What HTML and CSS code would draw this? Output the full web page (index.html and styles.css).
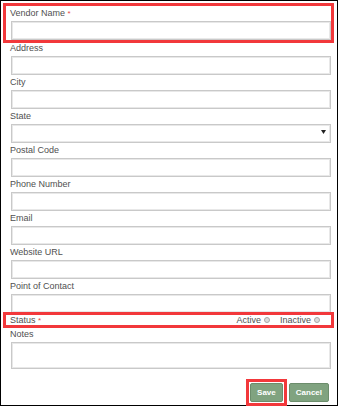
FILE: index.html
```html
<!DOCTYPE html>
<html lang="en">
<head>
    <meta charset="UTF-8">
    <meta name="viewport" content="width=device-width, initial-scale=1.0">
    <title>Vendor</title>
    <link rel="stylesheet" href="styles.css">
</head>
<body>

    <div class="panel">
        <form class="vendor-form">
            <div class="field field-first marked">
                <label class="field-label">Vendor Name <span class="req">*</span></label>
                <input class="text-input" type="text">
            </div>
            <div class="field">
                <label class="field-label">Address</label>
                <input class="text-input" type="text">
            </div>
            <div class="field">
                <label class="field-label">City</label>
                <input class="text-input" type="text">
            </div>
            <div class="field">
                <label class="field-label">State</label>
                <div class="select-wrap">
                    <select class="text-input select-input"></select>
                    <svg class="select-arrow" width="5" height="4" viewBox="0 0 5 4"><polygon points="0,0 5,0 2.5,4" fill="#222"/></svg>
                </div>
            </div>
            <div class="field">
                <label class="field-label">Postal Code</label>
                <input class="text-input" type="text">
            </div>
            <div class="field">
                <label class="field-label">Phone Number</label>
                <input class="text-input" type="text">
            </div>
            <div class="field">
                <label class="field-label">Email</label>
                <input class="text-input" type="text">
            </div>
            <div class="field">
                <label class="field-label">Website URL</label>
                <input class="text-input" type="text">
            </div>
            <div class="field">
                <label class="field-label">Point of Contact</label>
                <input class="text-input" type="text">
            </div>

            <div class="status-row marked">
                <span class="field-label">Status <span class="req">*</span></span>
                <div class="radios">
                    <label class="radio-option">Active <span class="radio"></span></label>
                    <label class="radio-option">Inactive <span class="radio"></span></label>
                </div>
            </div>

            <div class="field field-notes">
                <label class="field-label">Notes</label>
                <textarea class="text-input notes-input"></textarea>
            </div>

            <div class="actions">
                <span class="save-mark"><button type="button" class="button">Save</button></span>
                <button type="button" class="button">Cancel</button>
            </div>
        </form>
    </div>

</body>
</html>
```

FILE: styles.css
```css
body {
    margin: 0;
    padding: 0;
    background-color: #fff;
    font-family: "Liberation Sans", Arial, sans-serif;
}
.panel {
    width: 338px;
    height: 406px;
    box-sizing: border-box;
    border: 1px solid #000;
    background-color: #fff;
}
.vendor-form {
    padding: 5px 6px 0 5px;
}
.marked {
    outline: 3px solid #f2383b;
}
.field-first {
    margin-bottom: 1px;
}
.field-first .field-label {
    line-height: 14px;
}
.field-label {
    display: block;
    padding-left: 4px;
    font-size: 9px;
    line-height: 15px;
    color: #505050;
}
.req {
    color: #e84848;
    font-size: 8px;
}
.text-input {
    display: block;
    margin: 0 0 0 5px;
    width: calc(100% - 5px);
    height: 19px;
    box-sizing: border-box;
    border: 1px solid #c9c9c9;
    box-shadow: inset 0 0 0 1px #e8e8e8;
    background-color: #fff;
    padding: 0 4px;
    font-family: inherit;
    font-size: 9px;
}
.select-wrap {
    position: relative;
}
.select-input {
    appearance: none;
    -webkit-appearance: none;
    border-radius: 0;
}
.select-arrow {
    position: absolute;
    right: 5px;
    top: 6px;
}
.status-row {
    display: flex;
    justify-content: space-between;
    align-items: center;
    margin-top: 2px;
    height: 10px;
}
.status-row .field-label {
    line-height: 10px;
}
.radios {
    display: flex;
    align-items: center;
    padding-right: 11px;
}
.radio-option {
    display: flex;
    align-items: center;
    gap: 3px;
    margin-left: 10px;
    font-size: 9px;
    line-height: 10px;
    color: #505050;
}
.radio {
    display: inline-block;
    width: 6px;
    height: 6px;
    box-sizing: border-box;
    border: 1px solid #a8a8a8;
    border-radius: 50%;
    background-color: #dcdcdc;
}
.field-notes {
    margin-top: 2px;
}
.notes-input {
    height: 27px;
    resize: none;
}
.actions {
    display: flex;
    justify-content: flex-end;
    gap: 6px;
    margin-top: 14px;
    padding-right: 2px;
}
.save-mark {
    display: flex;
    outline: 3px solid #f2383b;
    outline-offset: 1px;
}
.button {
    height: 19px;
    padding: 0 6px;
    border: 1px solid #6c8d6c;
    border-radius: 2px;
    background-color: #80a380;
    color: #fff;
    font-family: inherit;
    font-size: 8px;
    font-weight: bold;
    cursor: pointer;
}
```
